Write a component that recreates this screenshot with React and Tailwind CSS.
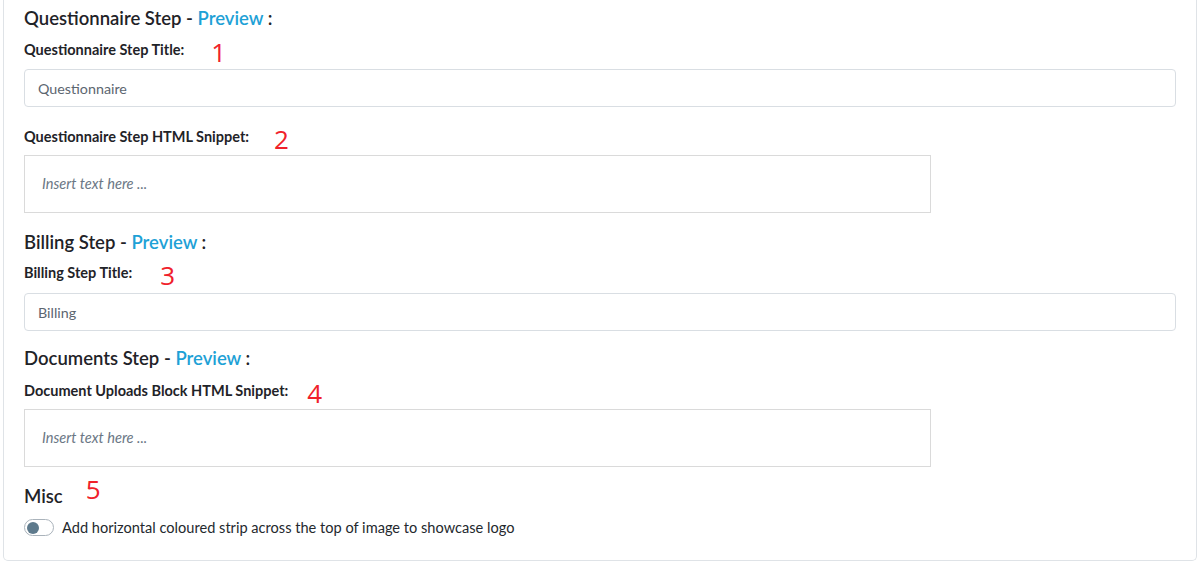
import { useState } from 'react';

const font = { fontFamily: '"Lato", "Open Sans", sans-serif' };

function Marker({ n, className = '' }) {
  // red annotation numbers drawn over the form
  return (
    <span
      className={`text-[26px] leading-none font-normal text-[#f0212b] ${className}`}
      style={{ fontFamily: '"Open Sans", sans-serif' }}
    >
      {n}
    </span>
  );
}

function StepHeading({ title, preview = true }) {
  return (
    <h3 className="text-[18.5px] leading-[24px] font-semibold text-[#1f2328]">
      {title}
      {preview && (
        <>
          {' - '}
          <a className="text-[#1ea1d6]">Preview</a> :
        </>
      )}
    </h3>
  );
}

function Label({ children, marker, gap }) {
  return (
    <div className="flex items-center h-[24px]">
      <label className="text-[14.5px] font-bold text-[#1f2328]">{children}</label>
      <Marker n={marker} className={gap} />
    </div>
  );
}

function TextInput({ value }) {
  return (
    <input
      defaultValue={value}
      className="w-full h-[38px] px-[13px] text-[14.3px] text-[#5c6670] border border-[#d9dee3] rounded-[4px] outline-none"
      style={font}
    />
  );
}

function Snippet() {
  return (
    <div className="w-[907px] h-[58px] border border-[#dadada] flex items-center pl-[17px] text-[14.6px] italic text-[#6b7785]">
      Insert text here ...
    </div>
  );
}

export default function App() {
  const [strip, setStrip] = useState(false);

  return (
    <div className="bg-white min-h-[565px]" style={font}>
      <div className="mx-[3px] border border-t-0 border-[#dfe3e7] rounded-b-[5px] pl-[20px] pr-[20px] pt-[6px] pb-[21px]">
        <StepHeading title="Questionnaire Step" />
        <div className="mt-[8px]">
          <Label marker="1" gap="ml-[27px] mt-[4px]">Questionnaire Step Title:</Label>
        </div>
        <div className="mt-[7px]">
          <TextInput value="Questionnaire" />
        </div>
        <div className="mt-[18px]">
          <Label marker="2" gap="ml-[25px] mt-[4px]">Questionnaire Step HTML Snippet:</Label>
        </div>
        <div className="mt-[6px]">
          <Snippet />
        </div>

        <div className="mt-[17px]">
          <StepHeading title="Billing Step" />
        </div>
        <div className="mt-[7px]">
          <Label marker="3" gap="ml-[28px] mt-[4px]">Billing Step Title:</Label>
        </div>
        <div className="mt-[8px]">
          <TextInput value="Billing" />
        </div>

        <div className="mt-[15px]">
          <StepHeading title="Documents Step" />
        </div>
        <div className="mt-[9px]">
          <Label marker="4" gap="ml-[19px] mt-[4px]">Document Uploads Block HTML Snippet:</Label>
        </div>
        <div className="mt-[6px]">
          <Snippet />
        </div>

        <div className="mt-[17px] flex items-start">
          <h3 className="text-[18.5px] leading-[24px] font-semibold text-[#1f2328]">Misc</h3>
          <Marker n="5" className="ml-[23px] -mt-[8px]" />
        </div>
        <div className="mt-[9px] flex items-center gap-[8px]">
          <button
            onClick={() => setStrip(!strip)}
            className={`w-[30px] h-[17px] rounded-full border border-[#aab3bb] bg-white flex items-center px-[2px] ${
              strip ? 'justify-end' : 'justify-start'
            }`}
          >
            <span className="w-[12px] h-[12px] rounded-full bg-[#5e7a8c]" />
          </button>
          <span className="text-[14.6px] text-[#24292e]">
            Add horizontal coloured strip across the top of image to showcase logo
          </span>
        </div>
      </div>
    </div>
  );
}
